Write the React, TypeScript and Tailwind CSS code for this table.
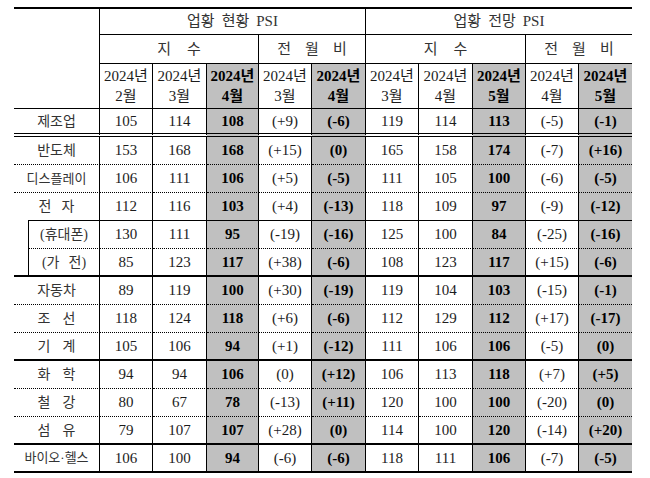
import React from "react";

type Row = {
  label: string;
  bottom: "double" | "dot" | "solid" | "thick";
  kind?: "parent" | "sub1" | "sub2";
  small?: boolean;
  v: string[];
};

const BOTTOM: Record<string, string> = {
  double: "[border-bottom:4px_double_#000]",
  dot: "[border-bottom:1px_dotted_#000]",
  solid: "[border-bottom:1px_solid_#000]",
  thick: "[border-bottom:2px_solid_#000]",
  none: "",
};

const R = "[border-right:1px_solid_#000]";
const L = "[border-left:1px_solid_#000]";
const T = "[border-top:2px_solid_#000]";
const HB = "[border-bottom:1px_solid_#000]";

const grey = [false, false, true, false, true, false, false, true, false, true];
const months = ["2월", "3월", "4월", "3월", "4월", "3월", "4월", "5월", "4월", "5월"];

const rows: Row[] = [
  { label: "제조업", bottom: "double", v: ["105", "114", "108", "(+9)", "(-6)", "119", "114", "113", "(-5)", "(-1)"] },
  { label: "반도체", bottom: "dot", v: ["153", "168", "168", "(+15)", "(0)", "165", "158", "174", "(-7)", "(+16)"] },
  { label: "디스플레이", bottom: "dot", small: true, v: ["106", "111", "106", "(+5)", "(-5)", "111", "105", "100", "(-6)", "(-5)"] },
  { label: "전 자", bottom: "solid", kind: "parent", v: ["112", "116", "103", "(+4)", "(-13)", "118", "109", "97", "(-9)", "(-12)"] },
  { label: "(휴대폰)", bottom: "dot", kind: "sub1", v: ["130", "111", "95", "(-19)", "(-16)", "125", "100", "84", "(-25)", "(-16)"] },
  { label: "(가 전)", bottom: "thick", kind: "sub2", v: ["85", "123", "117", "(+38)", "(-6)", "108", "123", "117", "(+15)", "(-6)"] },
  { label: "자동차", bottom: "dot", v: ["89", "119", "100", "(+30)", "(-19)", "119", "104", "103", "(-15)", "(-1)"] },
  { label: "조 선", bottom: "dot", v: ["118", "124", "118", "(+6)", "(-6)", "112", "129", "112", "(+17)", "(-17)"] },
  { label: "기 계", bottom: "thick", v: ["105", "106", "94", "(+1)", "(-12)", "111", "106", "106", "(-5)", "(0)"] },
  { label: "화 학", bottom: "dot", v: ["94", "94", "106", "(0)", "(+12)", "106", "113", "118", "(+7)", "(+5)"] },
  { label: "철 강", bottom: "dot", v: ["80", "67", "78", "(-13)", "(+11)", "120", "100", "100", "(-20)", "(0)"] },
  { label: "섬 유", bottom: "thick", v: ["79", "107", "107", "(+28)", "(0)", "114", "100", "120", "(-14)", "(+20)"] },
  { label: "바이오·헬스", bottom: "thick", small: true, v: ["106", "100", "94", "(-6)", "(-6)", "118", "111", "106", "(-7)", "(-5)"] },
];

function Spaced({ text, gap }: { text: string; gap: string }) {
  const parts = text.split(" ");
  return (
    <span className={`flex ${gap}`}>
      {parts.map((p, i) => (
        <span key={i}>{p}</span>
      ))}
    </span>
  );
}

const center = "flex items-center justify-center";

export default function App() {
  return (
    <div className="min-h-screen w-[650px] bg-white pt-[7px] pl-[14px] text-[#1c1c1c] [font-family:'Liberation_Serif','Noto_Sans_CJK_KR',serif] text-[15px]">
      <div className="grid w-[618px] grid-cols-[14px_72px_53px_54px_52px_53px_54px_53px_54px_53px_53px_53px] grid-rows-[28px_29px_45px_28px_28px_28px_28px_28px_28px_28px_28px_28px_28px_28px_28px_28px]">
        {/* header label cell */}
        <div className={`col-span-2 row-span-3 ${T} ${R} ${HB}`} />
        {/* header row 1 */}
        <div className={`col-span-5 ${center} ${T} ${R} ${HB} text-[#333]`}>
          <Spaced text="업황 현황 PSI" gap="gap-[7px]" />
        </div>
        <div className={`col-span-5 ${center} ${T} ${HB} text-[#333]`}>
          <Spaced text="업황 전망 PSI" gap="gap-[7px]" />
        </div>
        {/* header row 2 */}
        <div className={`col-span-3 ${center} ${R} ${HB} text-[#333]`}>
          <Spaced text="지 수" gap="gap-[16px]" />
        </div>
        <div className={`col-span-2 ${center} ${R} ${HB} text-[#333]`}>
          <Spaced text="전 월 비" gap="gap-[14px]" />
        </div>
        <div className={`col-span-3 ${center} ${R} ${HB} text-[#333]`}>
          <Spaced text="지 수" gap="gap-[16px]" />
        </div>
        <div className={`col-span-2 ${center} ${HB} text-[#333]`}>
          <Spaced text="전 월 비" gap="gap-[14px]" />
        </div>
        {/* header row 3 */}
        {months.map((m, i) => (
          <div
            key={i}
            className={`flex flex-col items-center justify-center leading-[20px] ${i < 9 ? R : ""} ${HB} ${
              grey[i] ? "bg-[#c0c0c0] font-bold text-black" : ""
            }`}
          >
            <span>2024년</span>
            <span>{m}</span>
          </div>
        ))}
        {/* data rows */}
        {rows.map((row, ri) => {
          const bb = BOTTOM[row.bottom];
          const labelSize = row.small ? "text-[13px]" : "text-[14px]";
          let label: React.ReactNode;
          if (row.kind === "parent") {
            label = (
              <div className={`col-span-2 flex flex-col text-[14px] text-[#333] ${R}`}>
                <div className={`flex-1 ${center}`}>
                  <Spaced text={row.label} gap="gap-[10px]" />
                </div>
                <div className="ml-[14px] h-px bg-black" />
              </div>
            );
          } else if (row.kind === "sub1" || row.kind === "sub2") {
            label = (
              <>
                {row.kind === "sub1" && <div className={`row-span-2 ${BOTTOM.thick}`} />}
                <div className={`${center} text-[14px] text-[#333] ${L} ${R} ${bb}`}>
                  <Spaced text={row.label} gap="gap-[9px]" />
                </div>
              </>
            );
          } else {
            label = (
              <div className={`col-span-2 ${center} text-[#333] ${R} ${bb} ${labelSize}`}>
                <Spaced text={row.label} gap={row.small ? "gap-0" : "gap-[12px]"} />
              </div>
            );
          }
          return (
            <React.Fragment key={ri}>
              {label}
              {row.v.map((val, i) => (
                <div
                  key={i}
                  className={`${center} ${i < 9 ? R : ""} ${bb} ${grey[i] ? "bg-[#c0c0c0] font-bold text-black" : ""}`}
                >
                  {val}
                </div>
              ))}
            </React.Fragment>
          );
        })}
      </div>
    </div>
  );
}
